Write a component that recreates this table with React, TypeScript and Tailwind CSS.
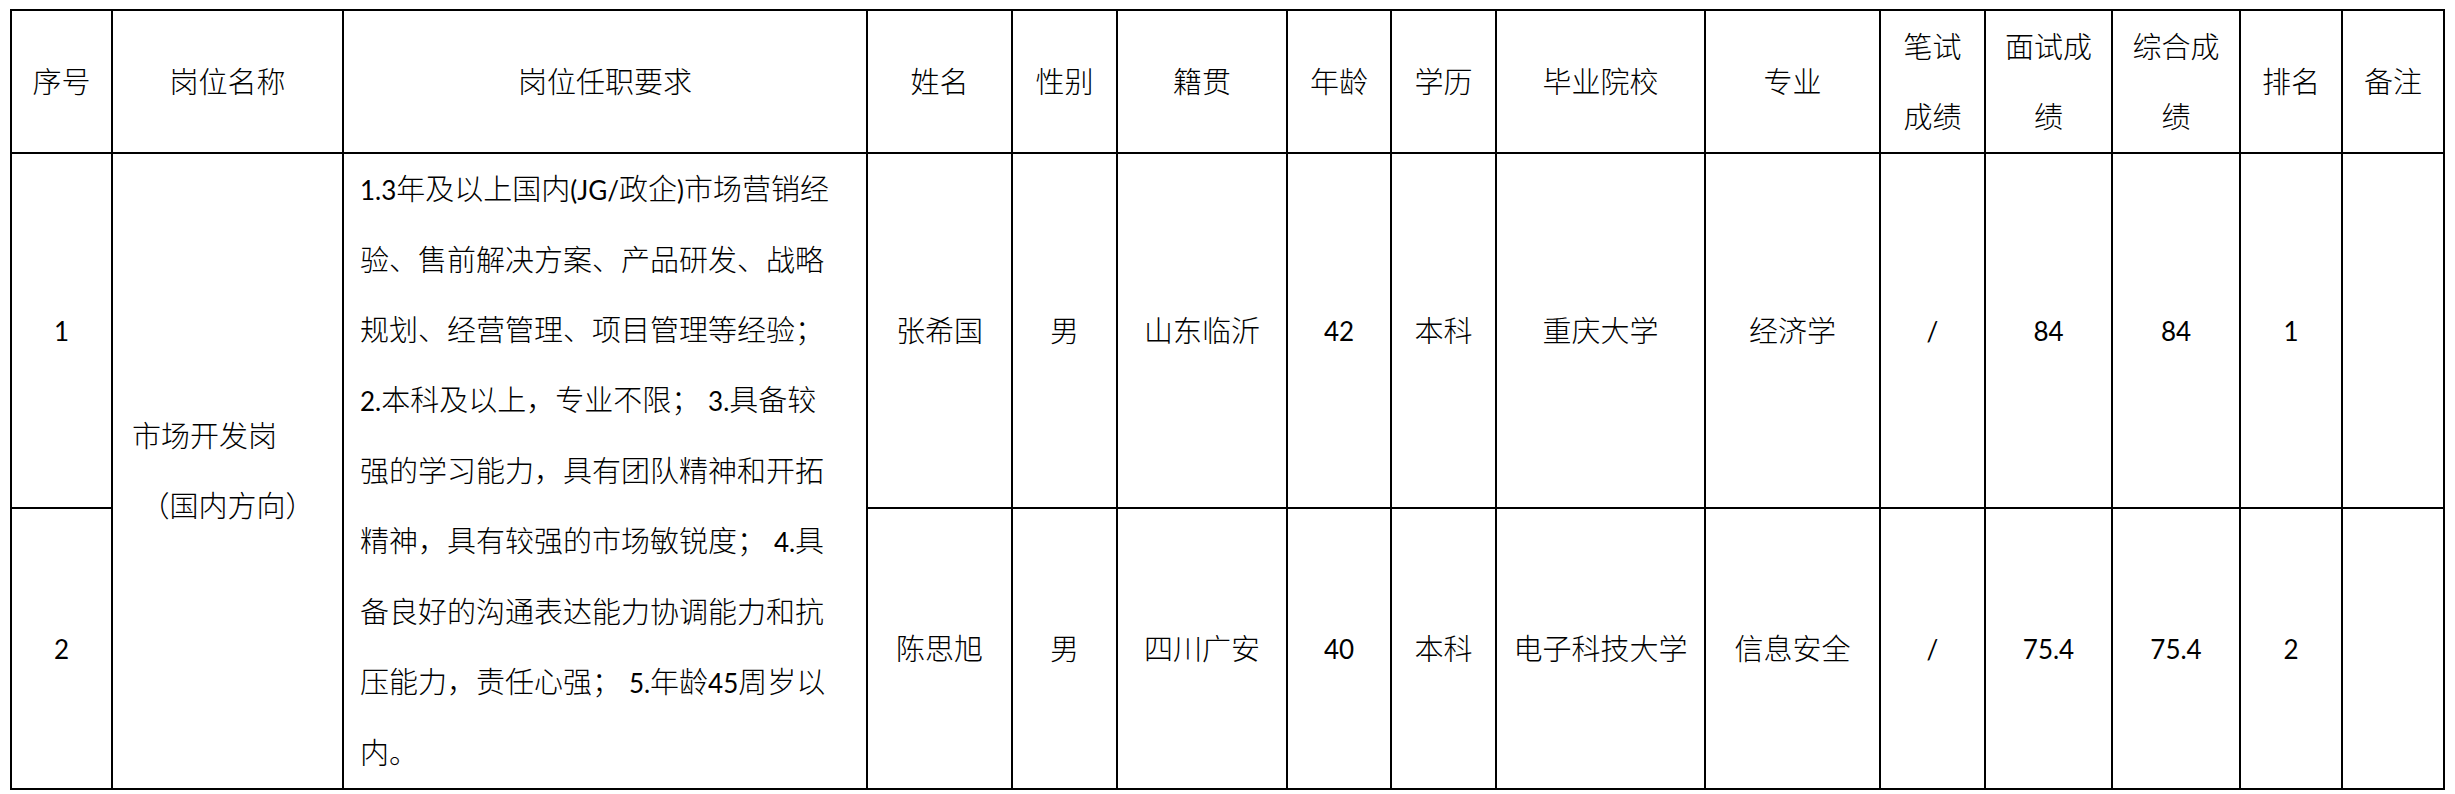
import React from 'react';

// Latin/digit runs are set a bit smaller so Lato sits like Calibri next to the CJK glyphs
function L({ children }: { children: React.ReactNode }) {
  return <span className="text-[26px] font-normal">{children}</span>;
}

const colWidths = [101, 231, 524, 145, 105, 170, 104, 105, 209, 175, 105, 127, 128, 102, 102];

const headers: React.ReactNode[] = [
  '序号',
  '岗位名称',
  '岗位任职要求',
  '姓名',
  '性别',
  '籍贯',
  '年龄',
  '学历',
  '毕业院校',
  '专业',
  <>笔试<br />成绩</>,
  <>面试成<br />绩</>,
  <>综合成<br />绩</>,
  '排名',
  '备注',
];

const people = [
  { no: '1', name: '张希国', sex: '男', origin: '山东临沂', age: '42', edu: '本科', school: '重庆大学', major: '经济学', written: '/', interview: '84', total: '84', rank: '1', h: 'h-[355px]' },
  { no: '2', name: '陈思旭', sex: '男', origin: '四川广安', age: '40', edu: '本科', school: '电子科技大学', major: '信息安全', written: '/', interview: '75.4', total: '75.4', rank: '2', h: 'h-[281px]' },
];

const cell = 'border-2 border-black text-center align-middle p-0';

export default function App() {
  return (
    <div className="bg-white min-h-screen pt-[9px] pl-[10px] text-black font-['Lato','Noto_Sans_CJK_SC',sans-serif] font-light text-[29px] leading-[70px]">
      <table className="table-fixed border-collapse w-[2433px]">
        <colgroup>
          {colWidths.map((w, i) => (
            <col key={i} style={{ width: w }} />
          ))}
        </colgroup>
        <thead>
          <tr className="h-[143px]">
            {headers.map((h, i) => (
              <th key={i} className={`${cell} font-light`}>
                {h}
              </th>
            ))}
          </tr>
        </thead>
        <tbody>
          {people.map((p, i) => (
            <tr key={p.no} className={p.h}>
              <td className={cell}><L>{p.no}</L></td>
              {i === 0 && (
                <>
                  <td rowSpan={2} className={`${cell} text-left`}>
                    <div className="pl-[19px] whitespace-nowrap">市场开发岗</div>
                    <div className="text-center whitespace-nowrap">（国内方向）</div>
                  </td>
                  <td rowSpan={2} className={`${cell} text-left pl-[16px] whitespace-nowrap`}>
                    <div><L>1.3</L>年及以上国内<L>(JG/</L>政企<L>)</L>市场营销经</div>
                    <div>验、售前解决方案、产品研发、战略</div>
                    <div>规划、经营管理、项目管理等经验；</div>
                    <div><L>2.</L>本科及以上，专业不限； <L>3.</L>具备较</div>
                    <div>强的学习能力，具有团队精神和开拓</div>
                    <div>精神，具有较强的市场敏锐度； <L>4.</L>具</div>
                    <div>备良好的沟通表达能力协调能力和抗</div>
                    <div>压能力，责任心强； <L>5.</L>年龄<L>45</L>周岁以</div>
                    <div>内。</div>
                  </td>
                </>
              )}
              <td className={cell}>{p.name}</td>
              <td className={cell}>{p.sex}</td>
              <td className={cell}>{p.origin}</td>
              <td className={cell}><L>{p.age}</L></td>
              <td className={cell}>{p.edu}</td>
              <td className={cell}>{p.school}</td>
              <td className={cell}>{p.major}</td>
              <td className={cell}><L>{p.written}</L></td>
              <td className={cell}><L>{p.interview}</L></td>
              <td className={cell}><L>{p.total}</L></td>
              <td className={cell}><L>{p.rank}</L></td>
              <td className={cell}></td>
            </tr>
          ))}
        </tbody>
      </table>
    </div>
  );
}
